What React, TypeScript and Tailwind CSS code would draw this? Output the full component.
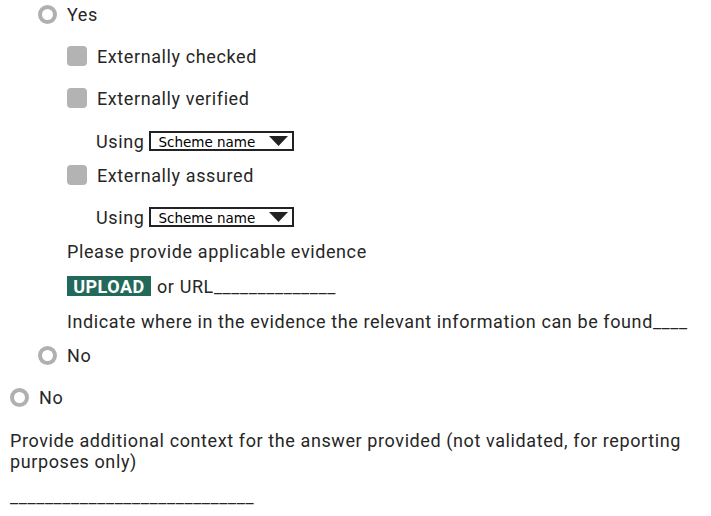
const font = { fontFamily: "Roboto, 'Liberation Sans', sans-serif" };

function Radio() {
  return <span className="inline-block w-[19px] h-[19px] rounded-full border-[4px] border-[#b0b0b0] bg-white shrink-0" />;
}

function Check() {
  return <span className="inline-block w-[20px] h-[20px] rounded-[4px] bg-[#b3b3b3] shrink-0" />;
}

function Scheme() {
  return (
    <span className="inline-flex items-center justify-between w-[145px] h-[20px] border-2 border-[#222] pl-[7px] pr-[4px] text-[13.5px] leading-[16px] tracking-normal text-black font-['DejaVu_Sans',sans-serif]">
      <span className="pt-[1px]">Scheme name</span>
      <svg width="19" height="10" viewBox="0 0 19 10">
        <path d="M0 0h19L9.5 10z" fill="#222" />
      </svg>
    </span>
  );
}

export default function App() {
  return (
    <div className="w-[711px] h-[516px] bg-white text-[#262626] text-[18px] tracking-[0.6px] pl-[10px] pt-[4px]" style={font}>
      <div className="flex items-center h-[20px] ml-[28px] gap-[10px]">
        <Radio />
        <span>Yes</span>
      </div>
      <div className="flex items-center h-[20px] mt-[22px] ml-[57px] gap-[10px]">
        <Check />
        <span>Externally checked</span>
      </div>
      <div className="flex items-center h-[20px] mt-[22px] ml-[57px] gap-[10px]">
        <Check />
        <span>Externally verified</span>
      </div>
      <div className="flex items-center h-[20px] mt-[23px] ml-[86px] gap-[5px]">
        <span>Using</span>
        <Scheme />
      </div>
      <div className="flex items-center h-[20px] mt-[14px] ml-[57px] gap-[10px]">
        <Check />
        <span>Externally assured</span>
      </div>
      <div className="flex items-center h-[20px] mt-[22px] ml-[86px] gap-[5px]">
        <span>Using</span>
        <Scheme />
      </div>
      <div className="flex items-center h-[20px] mt-[14px] ml-[57px]">
        <span>Please provide applicable evidence</span>
      </div>
      <div className="flex items-center h-[20px] mt-[15px] ml-[57px] gap-[6px]">
        <span className="inline-flex items-center justify-center w-[84px] h-[20px] bg-[#22695a] text-white font-bold tracking-[0.5px]">UPLOAD</span>
        <span>or URL______________</span>
      </div>
      <div className="flex items-center h-[20px] mt-[15px] ml-[57px]">
        <span>Indicate where in the evidence the relevant information can be found____</span>
      </div>
      <div className="flex items-center h-[20px] mt-[14px] ml-[28px] gap-[10px]">
        <Radio />
        <span>No</span>
      </div>
      <div className="flex items-center h-[20px] mt-[22px] gap-[10px]">
        <Radio />
        <span>No</span>
      </div>
      <p className="mt-[23px] w-[690px] leading-[21px]">
        Provide additional context for the answer provided (not validated, for reporting purposes only)
      </p>
      <p className="mt-[14px] leading-[21px]">____________________________</p>
    </div>
  );
}
